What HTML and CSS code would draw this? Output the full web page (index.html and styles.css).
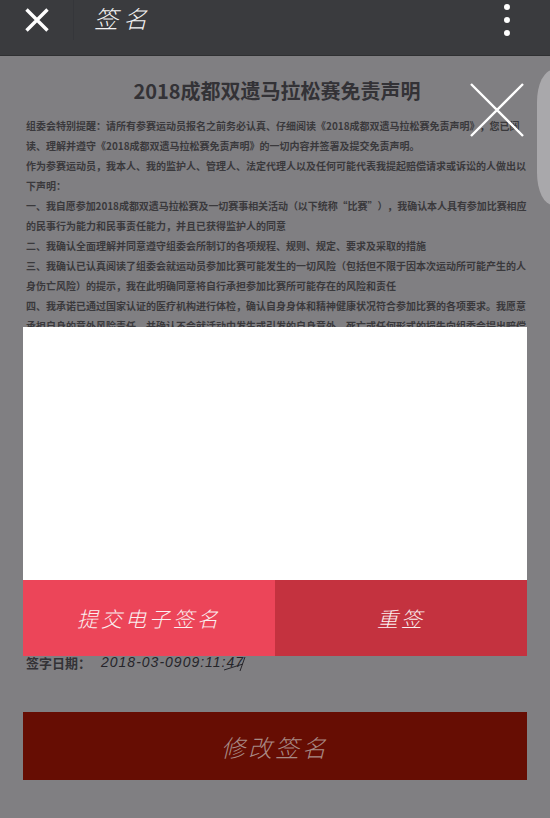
FILE: index.html
```html
<!DOCTYPE html>
<html lang="zh-CN">
<head>
<meta charset="utf-8">
<title>签名</title>
<link rel="stylesheet" href="styles.css">
</head>
<body>
<div class="page">
  <header class="topbar">
    <button class="close-btn" aria-label="关闭">
      <svg width="24" height="24" viewBox="0 0 24 24"><path d="M1.5 1.5 22.5 22.5M22.5 1.5 1.5 22.5" stroke="#fff" stroke-width="3.4" fill="none"/></svg>
    </button>
    <span class="divider"></span>
    <h1 class="page-title">签 名</h1>
    <div class="kebab"><i></i><i></i><i></i></div>
  </header>
  <main class="content">
    <h2 class="doc-title">2018成都双遗马拉松赛免责声明</h2>
    <div class="statement">
      <p>组委会特别提醒：请所有参赛运动员报名之前务必认真、仔细阅读《2018成都双遗马拉松赛免责声明》，您已阅</p>
      <p>读、理解并遵守《2018成都双遗马拉松赛免责声明》的一切内容并签署及提交免责声明。</p>
      <p>作为参赛运动员，我本人、我的监护人、管理人、法定代理人以及任何可能代表我提起赔偿请求或诉讼的人做出以</p>
      <p>下声明：</p>
      <p class="tight">一、我自愿参加2018成都双遗马拉松赛及一切赛事相关活动（以下统称“比赛”），我确认本人具有参加比赛相应</p>
      <p>的民事行为能力和民事责任能力，并且已获得监护人的同意</p>
      <p>二、我确认全面理解并同意遵守组委会所制订的各项规程、规则、规定、要求及采取的措施</p>
      <p>三、我确认已认真阅读了组委会就运动员参加比赛可能发生的一切风险（包括但不限于因本次运动所可能产生的人</p>
      <p>身伤亡风险）的提示，我在此明确同意将自行承担参加比赛所可能存在的风险和责任</p>
      <p>四、我承诺已通过国家认证的医疗机构进行体检，确认自身身体和精神健康状况符合参加比赛的各项要求。我愿意</p>
      <p>承担自身的意外风险责任，并确认不会就活动中发生或引发的自身意外、死亡或任何形式的损失向组委会提出赔偿</p>
    </div>
    <div class="sign-date">
      <span class="sign-label">签字日期：</span>
      <span class="sign-value">2018-03-0909:11:47<svg class="scribble" width="24" height="16" viewBox="0 0 24 16"><path d="M1 14 20 8M22 1 17 15" stroke="#26252a" stroke-width="1" fill="none"/></svg></span>
    </div>
    <button class="edit-btn">修改签名</button>
  </main>
  <div class="scrim-close">
    <svg width="54" height="54" viewBox="0 0 54 54"><path d="M1 1 53 53M53 1 1 53" stroke="#fff" stroke-width="2.4" fill="none"/></svg>
  </div>
  <div class="side-handle"></div>
  <section class="sign-modal">
    <div class="sign-canvas"></div>
    <div class="sign-actions">
      <button class="submit-btn">提交电子签名</button>
      <button class="reset-btn">重签</button>
    </div>
  </section>
</div>
</body>
</html>
```

FILE: styles.css
```css
* { box-sizing: border-box; }
html, body { margin: 0; padding: 0; }
body {
  width: 550px;
  height: 818px;
  overflow: hidden;
  background: #807f82;
  font-family: "Noto Sans CJK SC", "Liberation Sans", sans-serif;
}
button { border: 0; padding: 0; font-family: inherit; cursor: pointer; }
.page { position: relative; width: 550px; height: 818px; overflow: hidden; }

.topbar {
  height: 56px;
  background: #3a3b3e;
  border-bottom: 1px solid #2f3032;
  display: flex;
  align-items: center;
  padding-bottom: 15px;
}
.close-btn {
  background: none;
  width: 24px;
  height: 24px;
  margin-left: 25px;
  display: block;
}
.divider { width: 1px; height: 40px; background: #35363a; margin-left: 24px; }
.page-title {
  margin: -4px 0 0 20px;
  color: #f4f4f4;
  font-size: 24px;
  font-weight: 300;
  line-height: 30px;
  font-style: italic;
}
.kebab { margin-left: auto; margin-right: 40px; display: flex; flex-direction: column; gap: 7px; }
.kebab i { display: block; width: 6px; height: 6px; border-radius: 50%; background: #fff; }

.content { padding: 0 23px; }
.doc-title {
  margin: 20px 0 0;
  text-align: center;
  font-size: 20px;
  line-height: 30px;
  font-weight: 700;
  color: #333236;
  padding-left: 4px;
}
.statement { margin-top: 10px; padding-left: 3px; height: 515px; }
.statement p {
  margin: 0;
  font-size: 10px;
  line-height: 20px;
  height: 20px;
  font-weight: 700;
  color: #3a393c;
  white-space: nowrap;
  text-spacing-trim: space-all;
}
.statement .tight { letter-spacing: -0.06px; }
.sign-date { display: flex; align-items: center; height: 24px; padding-left: 3px; margin-top: 19px; }
.sign-label { font-size: 13px; font-weight: 700; color: #333236; }
.sign-value {
  position: relative;
  margin-left: 10px;
  font-family: "Liberation Sans", sans-serif;
  font-style: italic;
  font-size: 14px;
  letter-spacing: 1px;
  color: #26252a;
}
.scribble { position: absolute; right: -3px; top: 2px; }
.edit-btn {
  display: block;
  width: 504px;
  height: 68px;
  margin-top: 38px;
  background: #660d03;
  color: #a88a85;
  font-size: 24px;
  font-weight: 300;
  font-style: italic;
  letter-spacing: 3px;
}

.scrim-close { position: absolute; left: 470px; top: 83px; width: 54px; height: 54px; }
.side-handle {
  position: absolute;
  left: 537px;
  top: 70px;
  width: 40px;
  height: 135px;
  background: #a9a8ab;
  border-radius: 16px 0 0 16px / 32px 0 0 32px;
}
.sign-modal { position: absolute; left: 23px; top: 327px; width: 504px; }
.sign-canvas { height: 253px; background: #fff; }
.sign-actions { display: flex; height: 76px; }
.submit-btn, .reset-btn {
  color: #fbeff0;
  font-size: 21px;
  font-weight: 300;
  font-style: italic;
  letter-spacing: 3px;
}
.submit-btn { width: 252px; background: #ec4559; }
.reset-btn { width: 252px; background: #c4323f; }
```
